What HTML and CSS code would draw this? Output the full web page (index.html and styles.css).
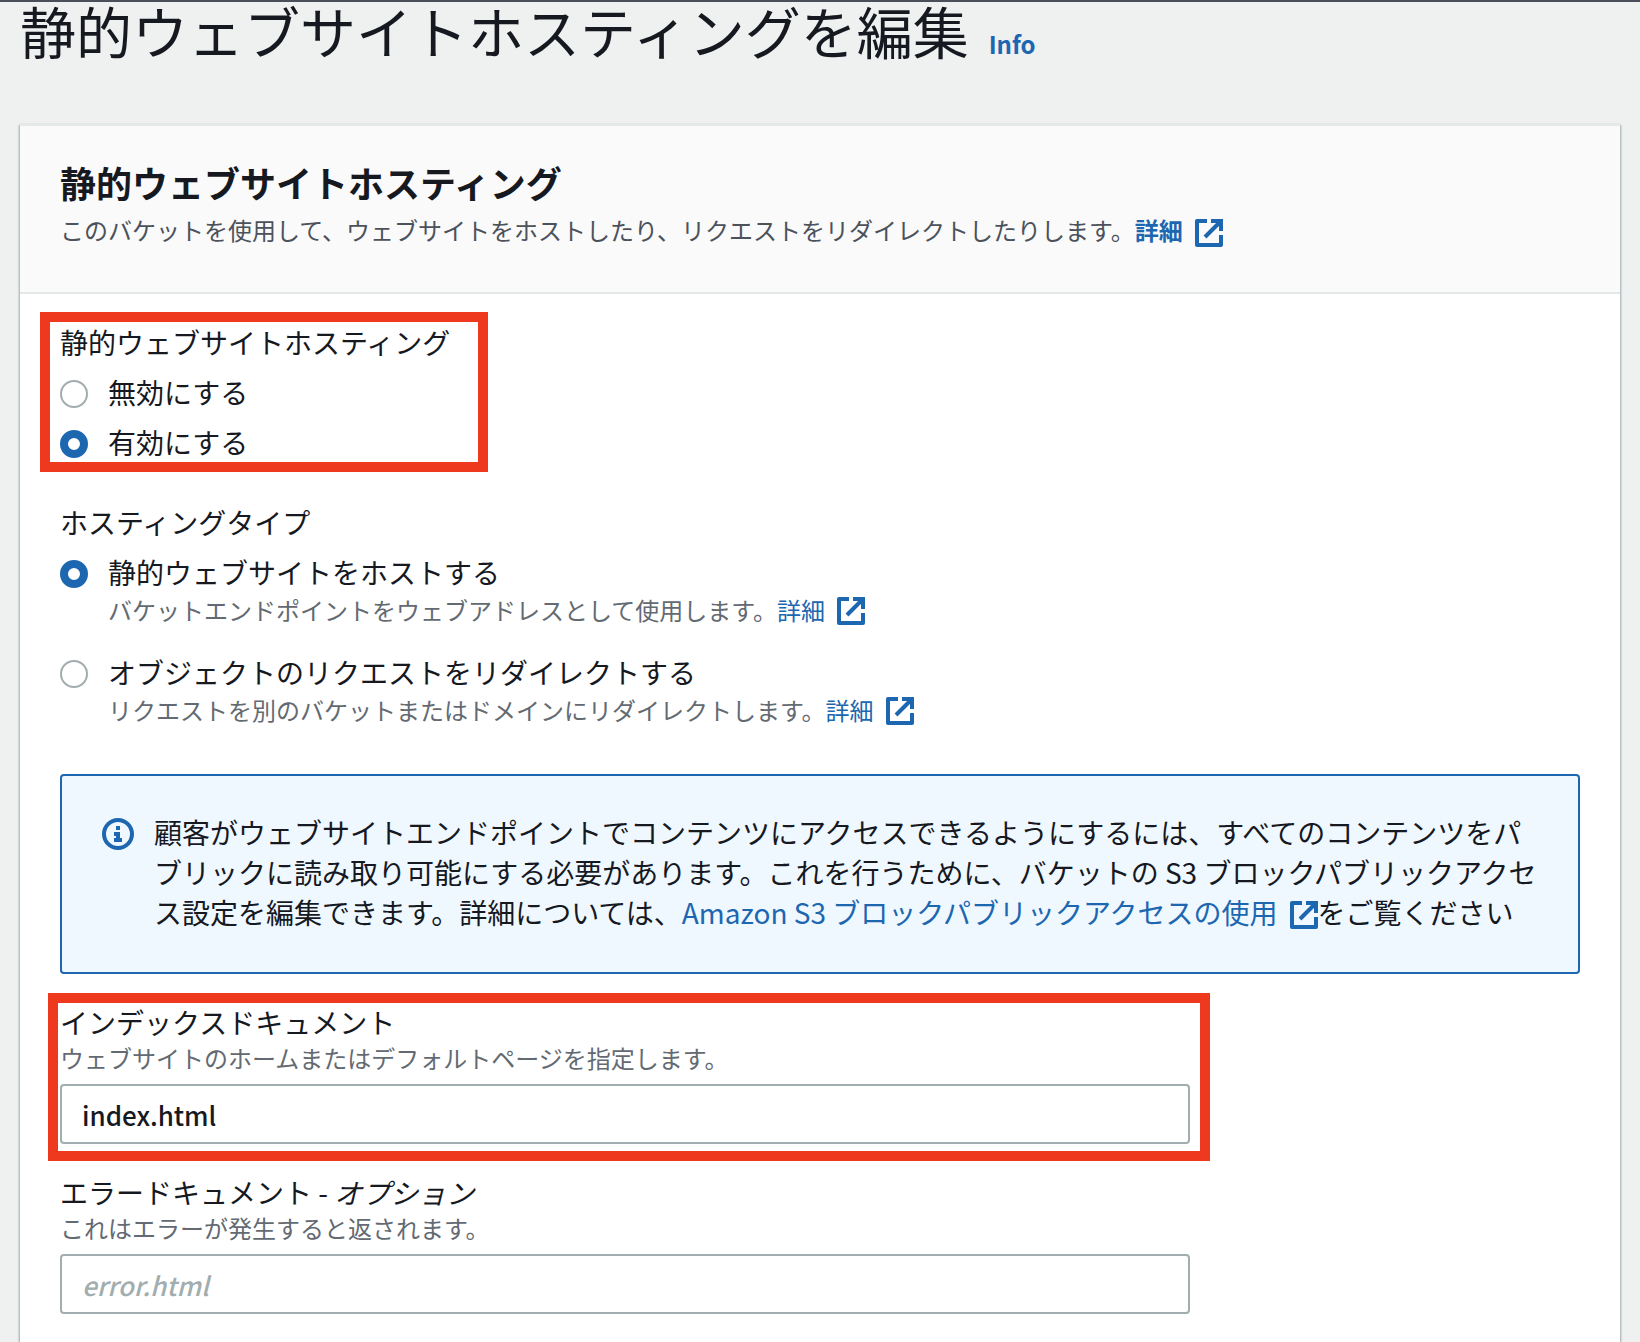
FILE: index.html
```html
<!DOCTYPE html>
<html lang="ja">
<head>
    <meta charset="UTF-8">
    <meta name="viewport" content="width=device-width, initial-scale=1.0">
    <title>静的ウェブサイトホスティングを編集</title>
    <link rel="stylesheet" href="styles.css">
</head>
<body>

<!-- 外部リンクアイコン -->
<svg class="icon-defs" aria-hidden="true">
    <symbol id="external" viewBox="0 0 28 28">
        <path d="M12 2H2v24h24V16" fill="none" stroke="currentColor" stroke-width="4" stroke-linejoin="round"/>
        <path d="M16 2h10v10M26 2L10 18" fill="none" stroke="currentColor" stroke-width="4"/>
    </symbol>
</svg>

<header class="page-header">
    <h1>静的ウェブサイトホスティングを編集</h1>
    <a class="info-link" href="#">Info</a>
</header>

<main class="card">
    <div class="card-header">
        <h2>静的ウェブサイトホスティング</h2>
        <p>このバケットを使用して、ウェブサイトをホストしたり、リクエストをリダイレクトしたりします。<a class="strong" href="#">詳細<svg class="external"><use href="#external"/></svg></a></p>
    </div>

    <form class="card-body">
        <!-- 有効/無効 -->
        <div class="group highlight highlight-radio" role="radiogroup" aria-labelledby="hosting-label">
            <div class="label" id="hosting-label">静的ウェブサイトホスティング</div>
            <div class="option">
                <input type="radio" name="hosting" id="hosting-off">
                <label for="hosting-off">無効にする</label>
            </div>
            <div class="option">
                <input type="radio" name="hosting" id="hosting-on" checked>
                <label for="hosting-on">有効にする</label>
            </div>
        </div>

        <!-- ホスティングタイプ -->
        <div class="group group-type" role="radiogroup" aria-labelledby="type-label">
            <div class="label" id="type-label">ホスティングタイプ</div>
            <div class="option">
                <input type="radio" name="type" id="type-host" checked>
                <div>
                    <label for="type-host">静的ウェブサイトをホストする</label>
                    <p class="hint">バケットエンドポイントをウェブアドレスとして使用します。<a href="#">詳細<svg class="external"><use href="#external"/></svg></a></p>
                </div>
            </div>
            <div class="option option-next">
                <input type="radio" name="type" id="type-redirect">
                <div>
                    <label for="type-redirect">オブジェクトのリクエストをリダイレクトする</label>
                    <p class="hint">リクエストを別のバケットまたはドメインにリダイレクトします。<a href="#">詳細<svg class="external"><use href="#external"/></svg></a></p>
                </div>
            </div>
        </div>

        <!-- お知らせ -->
        <div class="alert">
            <svg class="alert-icon" viewBox="0 0 32 32" aria-hidden="true">
                <circle cx="16" cy="16" r="14" fill="none" stroke="currentColor" stroke-width="4"/>
                <path d="M14 8h4v4h-4zM12 14h6v6h2v4h-8v-4h2v-2h-2z" fill="currentColor"/>
            </svg>
            <p>顧客がウェブサイトエンドポイントでコンテンツにアクセスできるようにするには、すべてのコンテンツをパブリックに読み取り可能にする必要があります。これを行うために、バケットの S3 ブロックパブリックアクセス設定を編集できます。詳細については、<a href="#">Amazon S3 ブロックパブリックアクセスの使用<svg class="external"><use href="#external"/></svg></a>をご覧ください</p>
        </div>

        <div class="field highlight highlight-field">
            <label class="label" for="index-doc">インデックスドキュメント</label>
            <p class="hint">ウェブサイトのホームまたはデフォルトページを指定します。</p>
            <input type="text" id="index-doc" value="index.html">
        </div>

        <div class="field">
            <label class="label" for="error-doc">エラードキュメント - <em>オプション</em></label>
            <p class="hint">これはエラーが発生すると返されます。</p>
            <input type="text" id="error-doc" placeholder="error.html">
        </div>
    </form>
</main>

</body>
</html>
```

FILE: styles.css
```css
* {
    box-sizing: border-box;
}

body {
    margin: 0;
    border-top: 2px solid #4b4f5b;
    background: #eff1f1;
    color: #16191f;
    font-family: "Noto Sans CJK JP", sans-serif;
    font-size: 28px;
    line-height: 40px;
}

h1, h2, p {
    margin: 0;
}

a {
    color: #1c67b0;
    text-decoration: none;
}

.icon-defs {
    display: none;
}

.external {
    width: 28px;
    height: 28px;
    margin-left: 12px;
    vertical-align: -5px;
}

/* ページタイトル */
.page-header {
    display: flex;
    align-items: baseline;
    gap: 20px;
    padding: 0 20px;
    margin-bottom: 60px;
}

h1 {
    font-size: 56px;
    font-weight: 400;
    line-height: 56px;
}

.info-link {
    font-size: 24px;
    font-weight: 700;
}

/* カード */
.card {
    margin: 0 20px;
    border-top: 2px solid #e5e8e8;
    background: #fff;
    box-shadow: 1px 1px 2px #a1adae, -1px 1px 2px #a1adae;
}

.card-header {
    padding: 34px 40px 42px;
    border-bottom: 2px solid #e5e8e8;
    background: #fafafa;
}

h2 {
    font-size: 36px;
    font-weight: 700;
    line-height: 44px;
}

.card-header p {
    padding-top: 6px;
    color: #4c525b;
    font-size: 24px;
}

.card-header .external {
    vertical-align: -7px;
}

.strong {
    font-weight: 700;
}

.card-body {
    padding: 30px 40px;
}

.group {
    margin-bottom: 40px;
}

.group-type {
    margin-bottom: 48px;
}

.label,
.option label {
    display: block;
    padding-bottom: 4px;
    line-height: 36px;
}

.option {
    display: flex;
    gap: 20px;
    margin-top: 10px;
}

.option-next {
    margin-top: 28px;
}

.hint {
    color: #636a72;
    font-size: 24px;
    line-height: 32px;
}

input[type="radio"] {
    appearance: none;
    flex: none;
    width: 28px;
    height: 28px;
    margin: 6px 0;
    border: 2px solid #a1adae;
    border-radius: 50%;
    background: #fff;
}

input[type="radio"]:checked {
    border: 8px solid #1c67b0;
}

/* お知らせ */
.alert {
    display: flex;
    gap: 20px;
    margin-bottom: 30px;
    padding: 36px 38px 40px 40px;
    border: 2px solid #1c67b0;
    border-radius: 4px;
    background: #f0f8ff;
}

.alert-icon {
    flex: none;
    width: 32px;
    height: 32px;
    margin-top: 6px;
    color: #1c67b0;
}

/* 入力欄 */
.field {
    width: calc(75% - 10px);
    margin-bottom: 30px;
}

.field .label {
    padding-bottom: 2px;
}

input[type="text"] {
    display: block;
    width: 100%;
    height: 60px;
    margin-top: 10px;
    padding: 0 20px;
    border: 2px solid #a1adae;
    border-radius: 4px;
    background: #fff;
    color: #16191f;
    font: inherit;
    font-size: 26px;
    font-weight: 500;
}

input::placeholder {
    color: #a1adae;
    font-style: italic;
}

/* 赤枠 */
.highlight {
    position: relative;
}

.highlight::after {
    content: "";
    position: absolute;
    border: 10px solid #ee391e;
    pointer-events: none;
}

.highlight-radio {
    width: fit-content;
}

.highlight-radio::after {
    inset: -12px -38px -8px -20px;
}

.highlight-field::after {
    inset: -11px -20px -17px -12px;
}
```
